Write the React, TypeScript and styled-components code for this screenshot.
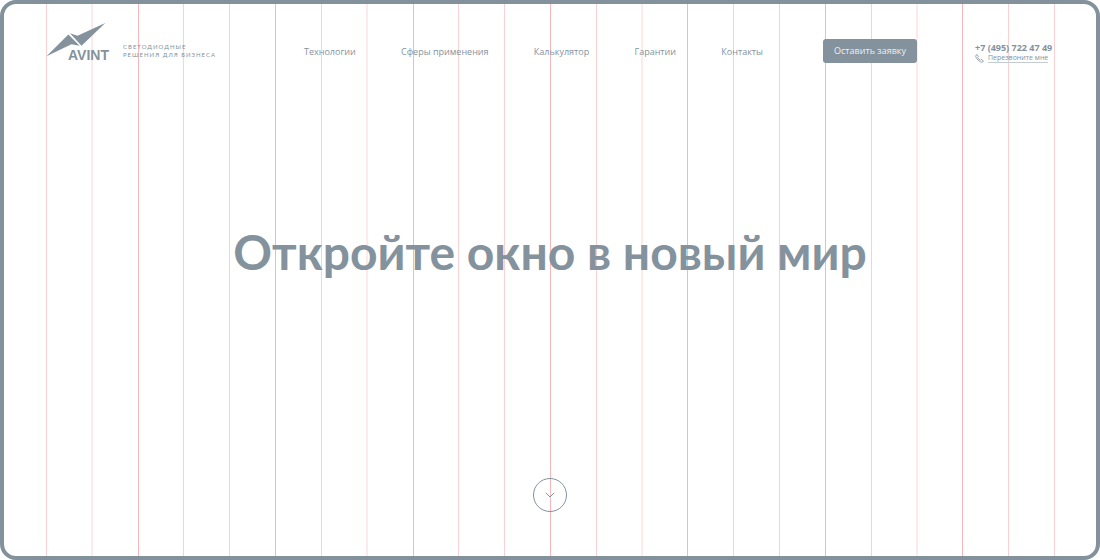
import React from "react";
import styled, { createGlobalStyle } from "styled-components";

const slate = "#84929d";

const GlobalStyle = createGlobalStyle`
  *, *::before, *::after { box-sizing: border-box; }
  body {
    margin: 0;
    background: #fff;
    color: ${slate};
    font-family: "Open Sans", "Noto Sans", sans-serif;
  }
`;

const Page = styled.div`
  position: relative;
  display: flex;
  flex-direction: column;
  min-height: 100vh;
`;

const Guides = styled.div`
  position: absolute;
  inset: 0 45px 0 46px;
  display: grid;
  grid-template-columns: repeat(22, 1fr) 1px;
  pointer-events: none;
`;

const Guide = styled.i`
  border-left: 1px solid #fbd0d3;
  &:nth-child(3n) { border-left-color: #f7b6bb; }
  &:nth-child(6n + 2) { margin-left: -1px; border-left: 2px solid #fdeaea; }
`;

const Frame = styled.div`
  position: absolute;
  inset: 0;
  border: 4px solid rgba(125, 140, 151, 0.96);
  border-radius: 16px;
  pointer-events: none;
`;

const Header = styled.header`
  position: relative;
  display: grid;
  grid-template-columns: minmax(0, 258fr) minmax(0, 519fr) minmax(0, 152fr) minmax(0, 79fr);
  align-items: center;
  padding: 22px 46px 0;
`;

const Brand = styled.a`
  display: flex;
  align-items: center;
  gap: 12px;
  color: inherit;
  text-decoration: none;
`;

const Tagline = styled.span`
  padding-top: 16px;
  font-family: Lato, "Noto Sans", sans-serif;
  font-size: 6px;
  line-height: 8px;
  letter-spacing: 1px;
  white-space: nowrap;
`;

const Nav = styled.nav`
  display: flex;
  justify-content: space-between;
  padding: 19px 60px 0 0;
`;

const NavLink = styled.a`
  color: inherit;
  font-size: 9px;
  font-weight: 500;
  line-height: 12px;
  text-decoration: none;
  white-space: nowrap;
`;

const RequestButton = styled.button`
  justify-self: start;
  width: 94px;
  height: 24px;
  margin-top: 16px;
  padding: 1px 0 0;
  border: 0;
  border-radius: 3px;
  background: ${slate};
  color: #eef0f2;
  font: 9px/12px "Open Sans", "Noto Sans", sans-serif;
  white-space: nowrap;
`;

const Contact = styled.div`
  display: flex;
  flex-direction: column;
  padding-top: 20px;
  white-space: nowrap;
`;

const Phone = styled.a`
  color: inherit;
  font-size: 9px;
  font-weight: 700;
  line-height: 12px;
  text-decoration: none;
`;

const Callback = styled.a`
  display: flex;
  align-items: center;
  gap: 4px;
  color: inherit;
  font-size: 7px;
  line-height: 8px;
  text-decoration: none;
  span { border-bottom: 1px solid #c5ccd1; }
`;

const Hero = styled.main`
  position: relative;
  flex: 1;
  display: flex;
  flex-direction: column;
  align-items: center;
  justify-content: space-between;
  padding: 157px 46px 48px;
`;

const Title = styled.h1`
  margin: 0;
  font-family: Lato, "Noto Sans", sans-serif;
  font-size: 48px;
  font-weight: 700;
  line-height: 64px;
  text-align: center;
`;

const ScrollButton = styled.button`
  display: grid;
  place-items: center;
  width: 34px;
  height: 34px;
  padding: 0;
  border: 1px solid ${slate};
  border-radius: 50%;
  background: transparent;
  color: inherit;
`;

const Logo = () => (
  <svg width="65" height="41" viewBox="0 0 65 41" role="img" aria-label="AVINT">
    <path d="M0.5 34.2 L22.4 12.5 L33.6 23.8 L25.5 22.2 Z" fill={slate} />
    <path d="M24 11.3 L31.5 13.7 L59.3 1 L35.5 23.7 Z" fill={slate} />
    <text x="22" y="38" fill={slate} fontFamily='"Liberation Sans", sans-serif' fontSize="14" fontWeight="700">AVINT</text>
  </svg>
);

const links = ["Технологии", "Сферы применения", "Калькулятор", "Гарантии", "Контакты"];

export default function App() {
  return (
    <Page>
      <GlobalStyle />
      <Guides aria-hidden="true">
        {Array.from({ length: 23 }, (_, i) => <Guide key={i} />)}
      </Guides>
      <Frame />
      <Header>
        <Brand href="#">
          <Logo />
          <Tagline>СВЕТОДИОДНЫЕ<br />РЕШЕНИЯ ДЛЯ БИЗНЕСА</Tagline>
        </Brand>
        <Nav>
          {links.map((label) => <NavLink href="#" key={label}>{label}</NavLink>)}
        </Nav>
        <RequestButton type="button">Оставить заявку</RequestButton>
        <Contact>
          <Phone href="tel:+74957224749">+7 (495) 722 47 49</Phone>
          <Callback href="#">
            <svg width="9" height="9" viewBox="0 0 9 9" fill="none" stroke={slate} strokeWidth="0.8" strokeLinejoin="round" aria-hidden="true">
              <path d="M1 1.2 L2.2 0.6 L3.5 2.7 L2.7 3.5 C3.2 4.6 4.2 5.6 5.4 6.2 L6.2 5.4 L8.3 6.8 L7.8 8 C6.8 8.8 4.8 7.8 3 6 C1.2 4.2 0.2 2.2 1 1.2 Z" />
            </svg>
            <span>Перезвоните мне</span>
          </Callback>
        </Contact>
      </Header>
      <Hero>
        <Title>Откройте окно в новый мир</Title>
        <ScrollButton type="button" aria-label="Прокрутить вниз">
          <svg width="10" height="6" viewBox="0 0 10 6" fill="none" stroke={slate} aria-hidden="true">
            <path d="M0.8 0.8 L5 5 L9.2 0.8" />
          </svg>
        </ScrollButton>
      </Hero>
    </Page>
  );
}
